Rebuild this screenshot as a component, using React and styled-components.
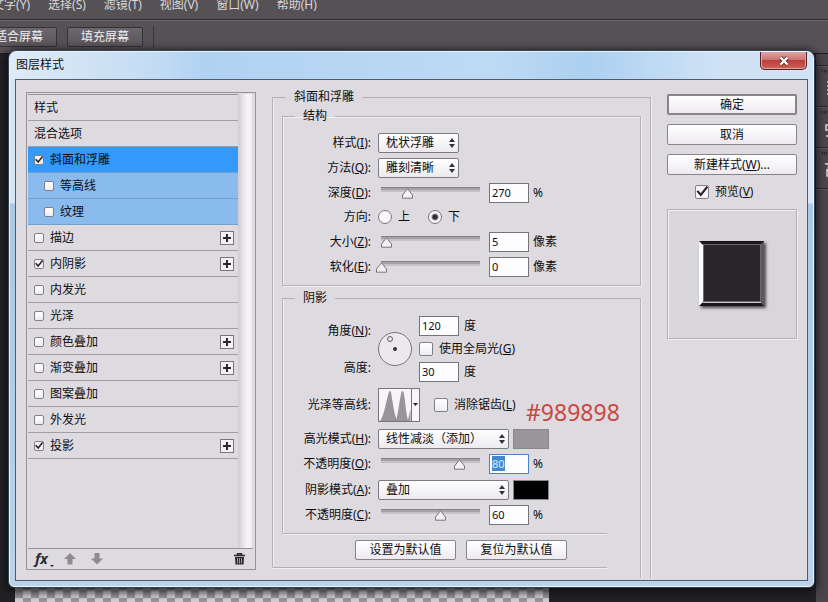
import React, { useEffect, useRef, useState } from "react";
import styled, { createGlobalStyle, css } from "styled-components";

const GlobalStyle = createGlobalStyle`
  * {
    box-sizing: border-box;
  }

  body {
    margin: 0;
    background: #222124;
  }

  body, button, input, select {
    font-family: "Noto Sans", "Noto Sans CJK SC", sans-serif;
    font-size: 12px;
    line-height: 16px;
    color: #0e0d10;
  }
`;

/* ---------- application window ---------- */

const Shell = styled.div`
  position: relative;
  display: flex;
  flex-direction: column;
  min-height: 100vh;
  overflow: hidden;
`;

const MenuBar = styled.nav`
  display: flex;
  gap: 18px;
  height: 19px;
  margin-left: -8px;
  line-height: 10px;
  white-space: nowrap;
`;

const MenuLink = styled.a`
  color: #d9d7db;
  text-decoration: none;
`;

const Chrome = styled.header`
  background: #555155;
`;

const OptionsBar = styled.div`
  display: flex;
  align-items: center;
  gap: 10px;
  height: 34px;
  margin-left: -19px;
  border-top: 1px solid #2c2a2d;
  box-shadow: inset 0 1px #6a666b;
`;

const ToolButton = styled.button`
  width: 76px;
  height: 20px;
  padding: 0;
  border: 1px solid #343235;
  border-radius: 2px;
  background: linear-gradient(#6b676c, #59555a);
  color: #f0eef1;
  line-height: 16px;
`;

const BarDivider = styled.span`
  height: 22px;
  border-left: 1px solid #38363a;
`;

const Workspace = styled.main`
  flex: 1;
  display: grid;
  grid-template-columns: 15px 2fr 1fr 12px;
  border-top: 1px solid #1b1a1d;
  background: #222124;
`;

const Canvas = styled.div`
  grid-column: 2;
  background: repeating-conic-gradient(#969497 0 25%, #cfcdd0 0 50%) 0 0 / 16px 16px;
`;

const Dock = styled.aside`
  grid-column: 4;
  padding-top: 11px;
  background: #4a474b;
`;

const DockGroup = styled.div`
  height: 41px;
  padding: 4px 0 0 6px;
  border-top: 1px solid #29272a;
  box-shadow: inset 0 1px #5d5a5e;
  overflow: hidden;
`;

/* ---------- dialog frame ---------- */

const Dialog = styled.section`
  position: absolute;
  top: 51px;
  left: 9px;
  right: 14px;
  padding: 0 5px 5px;
  border: 1px solid #e9f3fc;
  border-radius: 7px 7px 5px 5px;
  background: linear-gradient(#d6e7f8 0, #d6e7f8 151px, #a9c9e6 152px, #bad3ea 100%);
  box-shadow: 0 0 0 1px #35424f, 0 2px 10px 2px #0c0b0d;
`;

const TitleBar = styled.header`
  display: flex;
  justify-content: space-between;
  height: 27px;
  margin: 0 -5px;
  padding: 0 6px;
  border-radius: 6px 6px 0 0;
  background: linear-gradient(90deg, #dfeaf5 0, #c3dcf4 18%, #b0d2f2 24%, #bddaf5 60%, #acd0f0 72%, #cfe2f6 88%, #cfe2f6 100%);
`;

const Title = styled.h1`
  margin: 0;
  font-size: 12px;
  font-weight: 400;
  line-height: 26px;
`;

const CloseButton = styled.button`
  display: grid;
  place-items: center;
  width: 47px;
  height: 18px;
  padding: 0;
  border: 1px solid #57202a;
  border-top: 0;
  border-radius: 0 0 5px 5px;
  background: linear-gradient(#dca5a4 0, #cf7472 45%, #b8413d 50%, #cf6157 100%);
  box-shadow: inset 0 0 0 1px #e0a4a0;
`;

const Body = styled.div`
  display: flex;
  gap: 16px;
  padding: 9px 10px 10px;
  border: 1px solid #4c5d72;
  background: #dedbe0;
`;

/* ---------- effect list ---------- */

const Effects = styled.section`
  flex: 0 0 230px;
  display: flex;
  flex-direction: column;
  margin-top: 3px;
  border: 1px solid #96939a;
`;

const EffectScroll = styled.div`
  flex: 1;
  display: flex;
  padding: 1px 2px 0 1px;
`;

const EffectList = styled.ul`
  flex: 1;
  margin: 0;
  padding: 0;
  border-top: 1px solid #96939a;
  list-style: none;
`;

const rowTones = {
  plain: "transparent",
  active: "#3399fb",
  child: "#8abbee",
};

const EffectRow = styled.li`
  display: flex;
  align-items: center;
  justify-content: space-between;
  height: 26px;
  padding: 0 4px 0 ${(p) => (p.$tone === "child" ? 16 : 6)}px;
  border-bottom: 1px solid ${(p) => (p.$tone === "plain" ? "#a09da4" : "#74a0cc")};
  background: ${(p) => rowTones[p.$tone]};
`;

const CheckLabel = styled.label`
  display: flex;
  align-items: center;
  gap: 6px;
`;

const checkMark =
  "url(\"data:image/svg+xml,%3Csvg xmlns='http://www.w3.org/2000/svg' viewBox='0 0 12 12'%3E%3Cpath d='M2 5 5 8.5 10.5 1.5' fill='none' stroke='%23252327' stroke-width='1.8'/%3E%3C/svg%3E\")";

const CheckBox = styled.input`
  appearance: none;
  flex: none;
  width: ${(p) => p.$size || 10}px;
  height: ${(p) => p.$size || 10}px;
  margin: 0;
  border: 1px solid #837f87;
  border-radius: 2px;
  background: linear-gradient(#ffffff, #eeecf0);

  &:checked {
    background: ${checkMark} center / 100% no-repeat border-box, #f4f2f5;
  }
`;

const AddButton = styled.button`
  display: grid;
  place-items: center;
  width: 14px;
  height: 14px;
  padding: 0;
  border: 1px solid #77747b;
  background: #f3f1f5;
`;

const ScrollTrack = styled.div`
  width: 15px;
  background: linear-gradient(90deg, #cfccd1, #e4e1e6 30%, #f5f3f7 60%, #f3f1f5 85%, #dedbe0);
`;

const EffectTools = styled.footer`
  display: flex;
  align-items: center;
  gap: 10px;
  height: 21px;
  margin: 0 2px 0 1px;
  padding: 0 8px 0 7px;
  border-top: 1px solid #96939a;
`;

const IconButton = styled.button`
  display: grid;
  place-items: center;
  padding: 0;
  border: 0;
  background: none;

  &:last-child {
    margin-left: auto;
  }
`;

const FxButton = styled.button`
  display: flex;
  align-items: flex-end;
  gap: 2px;
  padding: 0;
  border: 0;
  background: none;
  font-size: 14px;
  font-style: italic;
  font-weight: 700;
  color: #2a282c;

  &::after {
    content: "";
    border: 2px solid transparent;
    border-top-color: #2a282c;
    border-bottom: 0;
  }
`;

/* ---------- settings ---------- */

const edge = css`
  border: 1px solid #b3b0b6;
  box-shadow: 1px 1px #f1eff3, inset 1px 1px #f1eff3;
`;

// right edge runs on below the box, bottom edge stops short of it
const openCorner = css`
  position: relative;
  border-bottom-color: transparent;
  box-shadow: 1px 0 #f1eff3, inset 1px 0 #f1eff3;

  &::before,
  &::after {
    content: "";
    position: absolute;
    background: #b3b0b6;
  }

  &::before {
    top: 100%;
    right: -1px;
    width: 1px;
    height: ${(p) => p.$tail}px;
    box-shadow: 1px 0 #f1eff3;
  }

  &::after {
    left: 0;
    right: ${(p) => p.$cut}px;
    bottom: -1px;
    height: 1px;
    box-shadow: 0 1px #f1eff3;
  }
`;

const Settings = styled.fieldset`
  flex: 1;
  min-width: 0;
  margin: 0 0 2px;
  padding: 3px 9px 7px;
  ${edge}
  ${openCorner}
`;

const Group = styled.fieldset`
  min-width: 0;
  margin: 0 0 ${(p) => p.$after}px;
  padding: ${(p) => p.$top}px 0 ${(p) => p.$bottom}px;
  ${edge}
  ${(p) => p.$tail && openCorner}
`;

const Legend = styled.legend`
  margin-left: ${(p) => p.$inset}px;
  padding: 0 8px;
  height: 16px;
`;

const Row = styled.div`
  display: grid;
  grid-template-columns: 88px 1fr;
  align-items: center;
  column-gap: 7px;
  height: ${(p) => p.$height}px;
`;

const FieldLabel = styled.label`
  text-align: right;
  white-space: nowrap;
`;

const Controls = styled.div`
  display: flex;
  align-items: center;
  gap: ${(p) => p.$gap || 4}px;
`;

const SelectBox = styled.span`
  display: grid;
  align-items: center;
  width: ${(p) => p.$width}px;

  > * {
    grid-area: 1 / 1;
  }

  svg {
    justify-self: end;
    margin-right: 4px;
    pointer-events: none;
  }
`;

const Select = styled.select`
  appearance: none;
  width: 100%;
  height: 20px;
  padding: 0 16px 0 7px;
  border: 1px solid #7d7a81;
  border-radius: 2px;
  background: linear-gradient(#ffffff, #eceaee);
`;

const thumb =
  "url(\"data:image/svg+xml,%3Csvg xmlns='http://www.w3.org/2000/svg' viewBox='0 0 11 11'%3E%3Cpath d='M5.5 .8 10.5 7V10.2H.5V7Z' fill='%23f3f1f4' stroke='%23777479'/%3E%3C/svg%3E\")";

const Slider = styled.input`
  appearance: none;
  width: 109px;
  height: 20px;
  margin: 0 0 0 -2px;
  background: none;

  &::-webkit-slider-runnable-track {
    height: 12px;
    background: linear-gradient(#858288 0 1px, #a5a2a8 1px 3px, #c4c1c7 3px 5px) 50% 0 / calc(100% - 10px) 5px no-repeat;
  }

  &::-webkit-slider-thumb {
    appearance: none;
    width: 11px;
    height: 11px;
    margin-top: 1px;
    background: ${thumb} center / 100% no-repeat;
  }
`;

const NumberInput = styled.input`
  width: 40px;
  height: 20px;
  padding: 0 2px 1px;
  border: 1px solid #76737a;
  background: #fdfcfe;
  font-size: 11px;
  line-height: 14px;
  outline: none;

  &:focus {
    border-color: #4d82ba;
  }

  &::selection {
    background: #4189ca;
    color: #d9ecff;
  }
`;

const Radio = styled.input`
  appearance: none;
  width: 14px;
  height: 14px;
  margin: 0;
  border: 1px solid #77747b;
  border-radius: 50%;
  background: #f8f6f9;

  &:checked {
    background: radial-gradient(circle, #2f2d31 0 2px, #f8f6f9 4px);
  }
`;

const RadioLabel = styled.label`
  display: flex;
  align-items: center;
  gap: 6px;
`;

const AngleBlock = styled.div`
  display: grid;
  grid-template-columns: 88px 34px 1fr;
  align-items: center;
  column-gap: 7px;
  height: 70px;
`;

const AngleLabels = styled.div`
  display: flex;
  flex-direction: column;
  gap: 21px;
`;

const AngleFields = styled.div`
  display: flex;
  flex-direction: column;
  gap: 5px;
`;

const ContourButton = styled.button`
  display: block;
  margin-right: 10px;
  width: 42px;
  height: 34px;
  padding: 0;
  border: 1px solid #77747b;
  background: #f7f5f8;
`;

const Swatch = styled.button`
  width: 36px;
  height: 20px;
  padding: 0;
  border: 1px solid #8a878d;
  background: ${(p) => p.$color};
`;

const Defaults = styled.div`
  display: flex;
  justify-content: center;
  gap: 10px;
  padding-right: 1px;
`;

const PushButton = styled.button`
  width: ${(p) => p.$width || "101px"};
  height: 20px;
  padding: 0;
  border: ${(p) => (p.$primary ? 2 : 1)}px solid #87848b;
  border-radius: 2px;
  background: linear-gradient(#ffffff, #edeaef);
`;

const Note = styled.span`
  position: absolute;
  top: 345px;
  left: 516px;
  font-size: 23px;
  line-height: 30px;
  color: #cb4640;
`;

/* ---------- actions ---------- */

const Actions = styled.section`
  flex: 0 0 130px;
  display: flex;
  flex-direction: column;
  gap: 9px;
  padding-top: 5px;

  ${PushButton} {
    height: 21px;
  }
`;

const PreviewLabel = styled(CheckLabel)`
  padding-left: 28px;
`;

const PreviewBox = styled.div`
  display: grid;
  place-items: center;
  height: 130px;
  background: #d9d6db;
  ${edge}
`;

/* ---------- pieces ---------- */

const effects = [
  { name: "斜面和浮雕", tone: "active", on: true },
  { name: "等高线", tone: "child" },
  { name: "纹理", tone: "child" },
  { name: "描边", add: true },
  { name: "内阴影", on: true, add: true },
  { name: "内发光" },
  { name: "光泽" },
  { name: "颜色叠加", add: true },
  { name: "渐变叠加", add: true },
  { name: "图案叠加" },
  { name: "外发光" },
  { name: "投影", on: true, add: true },
];

const Caption = ({ text, hotkey, colon = ":" }) => (
  <>
    {text}
    {hotkey && (
      <>
        (<u>{hotkey}</u>)
      </>
    )}
    {colon}
  </>
);

function Dropdown({ id, width, value }) {
  return (
    <SelectBox $width={width}>
      <Select id={id} defaultValue={value}>
        <option>{value}</option>
      </Select>
      <svg width="6" height="10" viewBox="0 0 6 10" fill="#343236">
        <path d="M3 0 6 4H0ZM3 10 0 6H6Z" />
      </svg>
    </SelectBox>
  );
}

function SliderRow({ id, height, text, hotkey, max, start, unit, inputRef }) {
  const [value, setValue] = useState(start);
  return (
    <Row $height={height}>
      <FieldLabel htmlFor={id}>
        <Caption text={text} hotkey={hotkey} />
      </FieldLabel>
      <Controls>
        <Slider
          type="range"
          aria-label={text}
          max={max}
          value={value}
          onChange={(e) => setValue(e.target.value)}
        />
        <NumberInput
          id={id}
          ref={inputRef}
          value={value}
          onChange={(e) => setValue(e.target.value)}
        />
        <span>{unit}</span>
      </Controls>
    </Row>
  );
}

function EffectPanel() {
  return (
    <Effects>
      <EffectScroll>
        <EffectList>
          <EffectRow $tone="plain">样式</EffectRow>
          <EffectRow $tone="plain">混合选项</EffectRow>
          {effects.map(({ name, tone = "plain", on, add }) => (
            <EffectRow key={name} $tone={tone}>
              <CheckLabel>
                <CheckBox type="checkbox" defaultChecked={on} />
                {name}
              </CheckLabel>
              {add && (
                <AddButton aria-label={name}>
                  <svg width="8" height="8" viewBox="0 0 8 8" fill="#2a282c">
                    <path d="M3 0H5V3H8V5H5V8H3V5H0V3H3Z" />
                  </svg>
                </AddButton>
              )}
            </EffectRow>
          ))}
        </EffectList>
        <ScrollTrack />
      </EffectScroll>
      <EffectTools>
        <FxButton>fx</FxButton>
        <IconButton aria-label="up">
          <svg width="12" height="12" viewBox="0 0 12 12" fill="#8d8a90">
            <path d="M6 0 12 6H8.5V11.5H3.5V6H0Z" />
          </svg>
        </IconButton>
        <IconButton aria-label="down">
          <svg width="20" height="12" viewBox="-5 0 20 12" fill="#8d8a90">
            <path d="M6 11.5 12 5.5H8.5V0H3.5V5.5H0Z" />
          </svg>
        </IconButton>
        <IconButton aria-label="delete">
          <svg width="11" height="12" viewBox="0 0 11 12" fill="none" stroke="#2a282c">
            <path d="M0 2.5H11M3.5 2V.7H7.5V2" strokeWidth="1.4" />
            <path d="M1 4H10L9.5 11.5H1.5Z" fill="#2a282c" stroke="none" />
            <path d="M3.5 5V10.5M5.5 5V10.5M7.5 5V10.5" stroke="#bab7bd" strokeWidth=".8" />
          </svg>
        </IconButton>
      </EffectTools>
    </Effects>
  );
}

function StructureGroup() {
  return (
    <Group $top={6} $bottom={5} $after={4}>
      <Legend $inset={12}>结构</Legend>
      <Row $height={25}>
        <FieldLabel htmlFor="style">
          <Caption text="样式" hotkey="I" />
        </FieldLabel>
        <Dropdown id="style" width={81} value="枕状浮雕" />
      </Row>
      <Row $height={25}>
        <FieldLabel htmlFor="method">
          <Caption text="方法" hotkey="Q" />
        </FieldLabel>
        <Dropdown id="method" width={81} value="雕刻清晰" />
      </Row>
      <SliderRow id="depth" height={25} text="深度" hotkey="D" max={1000} start={270} unit="%" />
      <Row $height={24}>
        <FieldLabel as="span">
          <Caption text="方向" />
        </FieldLabel>
        <Controls $gap={18}>
          <RadioLabel>
            <Radio type="radio" name="direction" />上
          </RadioLabel>
          <RadioLabel>
            <Radio type="radio" name="direction" defaultChecked />下
          </RadioLabel>
        </Controls>
      </Row>
      <SliderRow id="size" height={25} text="大小" hotkey="Z" max={100} start={5} unit="像素" />
      <SliderRow id="soften" height={26} text="软化" hotkey="E" max={16} start={0} unit="像素" />
    </Group>
  );
}

function ShadingGroup() {
  const opacityRef = useRef(null);

  useEffect(() => {
    opacityRef.current.focus();
    opacityRef.current.select();
  }, []);

  return (
    <Group $top={8} $bottom={5} $after={6} $tail={45} $cut={33}>
      <Legend $inset={12}>阴影</Legend>
      <AngleBlock>
        <AngleLabels>
          <FieldLabel htmlFor="angle">
            <Caption text="角度" hotkey="N" />
          </FieldLabel>
          <FieldLabel htmlFor="altitude">
            <Caption text="高度" />
          </FieldLabel>
        </AngleLabels>
        <svg width="34" height="34" viewBox="0 0 34 34">
          <circle cx="17" cy="17" r="16.5" fill="#ebe9ed" stroke="#77747b" />
          <circle cx="12" cy="7" r="2.5" fill="none" stroke="#5e5b62" />
          <circle cx="17" cy="17" r="2" fill="#343236" />
        </svg>
        <AngleFields>
          <Controls $gap={5}>
            <NumberInput id="angle" defaultValue="120" />度
          </Controls>
          <CheckLabel>
            <CheckBox type="checkbox" $size={14} />
            <span>
              <Caption text="使用全局光" hotkey="G" colon="" />
            </span>
          </CheckLabel>
          <Controls $gap={5}>
            <NumberInput id="altitude" defaultValue="30" />度
          </Controls>
        </AngleFields>
      </AngleBlock>
      <Row $height={42}>
        <FieldLabel as="span">
          <Caption text="光泽等高线" />
        </FieldLabel>
        <Controls>
          <ContourButton aria-label="光泽等高线">
            <svg width="40" height="32" viewBox="0 0 40 32">
              <path
                d="M1 32C5 28 8 8 10 3Q11 1 12 3C13 8 15 25 17.5 30C19 25 21 8 22.5 3Q23.5 1 24.5 3C26 8 27 26 29 31L31.5 20V32Z"
                fill="#97949a"
              />
              <path d="M32.5 0V32" stroke="#77747b" />
              <path d="M34 14H39L36.5 17Z" fill="#252327" />
            </svg>
          </ContourButton>
          <CheckLabel>
            <CheckBox type="checkbox" $size={14} />
            <span>
              <Caption text="消除锯齿" hotkey="L" colon="" />
            </span>
          </CheckLabel>
        </Controls>
      </Row>
      <Row $height={25}>
        <FieldLabel htmlFor="highlight">
          <Caption text="高光模式" hotkey="H" />
        </FieldLabel>
        <Controls>
          <Dropdown id="highlight" width={131} value="线性减淡（添加）" />
          <Swatch $color="#98959b" aria-label="高光模式" />
        </Controls>
      </Row>
      <SliderRow
        id="highlight-opacity"
        height={26}
        text="不透明度"
        hotkey="O"
        max={100}
        start={80}
        unit="%"
        inputRef={opacityRef}
      />
      <Row $height={25}>
        <FieldLabel htmlFor="shadow">
          <Caption text="阴影模式" hotkey="A" />
        </FieldLabel>
        <Controls>
          <Dropdown id="shadow" width={131} value="叠加" />
          <Swatch $color="#020202" aria-label="阴影模式" />
        </Controls>
      </Row>
      <SliderRow
        id="shadow-opacity"
        height={26}
        text="不透明度"
        hotkey="C"
        max={100}
        start={60}
        unit="%"
      />
    </Group>
  );
}

function ActionPanel() {
  return (
    <Actions>
      <PushButton $width="100%" $primary>
        确定
      </PushButton>
      <PushButton $width="100%">取消</PushButton>
      <PushButton $width="100%">
        新建样式(<u>W</u>)...
      </PushButton>
      <PreviewLabel>
        <CheckBox type="checkbox" $size={14} defaultChecked />
        <span>
          <Caption text="预览" hotkey="V" colon="" />
        </span>
      </PreviewLabel>
      <PreviewBox>
        <svg width="74" height="74" viewBox="0 0 74 74">
          <defs>
            <filter id="drop" x="-20%" y="-20%" width="150%" height="150%">
              <feDropShadow dx="2" dy="2" stdDeviation="1.5" floodColor="#2a282c" floodOpacity=".8" />
            </filter>
          </defs>
          <rect x="4" y="4" width="65" height="65" fill="#1a191c" filter="url(#drop)" />
          <path d="M4 4 8 8V65L4 69Z" fill="#fbfafc" />
          <path d="M69 4 65 8V65L69 69Z" fill="#5c595f" />
          <rect x="8.5" y="7.5" width="57" height="57" fill="#28262a" stroke="#6b686e" />
          <path d="M8 65.5H66" stroke="#c9c6cc" />
        </svg>
      </PreviewBox>
    </Actions>
  );
}

const menus = [
  ["文字", "Y"],
  ["选择", "S"],
  ["滤镜", "T"],
  ["视图", "V"],
  ["窗口", "W"],
  ["帮助", "H"],
];

const dockIcons = [
  "M7 6H12M7 10H12M7 14H12M7 18H12M9 5V19",
  "M6 8H10V13H6ZM6 19H12M9 15H12",
  "M5 6C12 4 6 14 9 13M7 11V18H12",
];

function App() {
  return (
    <Shell>
      <GlobalStyle />
      <Chrome>
        <MenuBar>
          {menus.map(([text, key]) => (
            <MenuLink href="#" key={key}>
              {text}({key})
            </MenuLink>
          ))}
        </MenuBar>
        <OptionsBar>
          <ToolButton>适合屏幕</ToolButton>
          <ToolButton>填充屏幕</ToolButton>
          <BarDivider />
        </OptionsBar>
      </Chrome>
      <Workspace>
        <Canvas />
        <Dock>
          {dockIcons.map((d) => (
            <DockGroup key={d}>
              <svg width="12" height="34" viewBox="0 0 12 34" fill="none">
                <path d="M0 1H12" stroke="#232124" strokeWidth="3" strokeDasharray="1 1" />
                <path d={d} transform="translate(-2 6)" stroke="#d5d3d7" strokeWidth="1.5" />
              </svg>
            </DockGroup>
          ))}
          <DockGroup />
        </Dock>
      </Workspace>

      <Dialog>
        <TitleBar>
          <Title>图层样式</Title>
          <CloseButton aria-label="close">
            <svg width="12" height="10" viewBox="0 0 12 10">
              <path d="M2.5 1.5 9.5 8.5M9.5 1.5 2.5 8.5" stroke="#5f2a30" strokeWidth="4" />
              <path d="M2.5 1.5 9.5 8.5M9.5 1.5 2.5 8.5" stroke="#ffffff" strokeWidth="2.4" />
            </svg>
          </CloseButton>
        </TitleBar>
        <Body>
          <EffectPanel />
          <Settings $tail={11} $cut={43}>
            <Legend $inset={4}>斜面和浮雕</Legend>
            <StructureGroup />
            <ShadingGroup />
            <Defaults>
              <PushButton>设置为默认值</PushButton>
              <PushButton>复位为默认值</PushButton>
            </Defaults>
          </Settings>
          <ActionPanel />
        </Body>
        <Note>#989898</Note>
      </Dialog>
    </Shell>
  );
}

export default App;
